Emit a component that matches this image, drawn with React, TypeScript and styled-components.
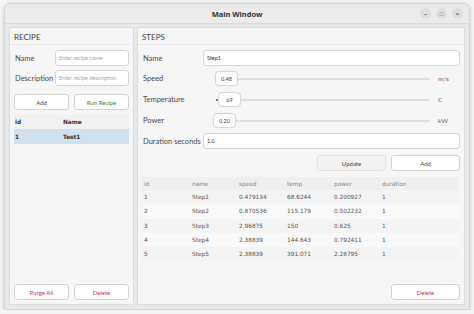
import React from "react";
import styled, { createGlobalStyle } from "styled-components";

const GlobalStyle = createGlobalStyle`
  html, body { margin: 0; padding: 0; background: #f4f4f4; }
  body { font-family: Lato, "Noto Sans", sans-serif; }
  * { box-sizing: border-box; }
`;

const Window = styled.div`
  margin: 3px 4px 0 4px;
  height: 307px;
  background: #e7e8e9;
  border: 1px solid #d2d2d2;
  border-radius: 7px 7px 2px 2px;
  box-shadow: 0 1px 4px rgba(0, 0, 0, 0.18);
  display: flex;
  flex-direction: column;
  overflow: hidden;
`;

const TitleBar = styled.div`
  height: 20px;
  background: #ebebeb;
  border-bottom: 1px solid #dadada;
  display: flex;
  align-items: center;
  justify-content: center;
  position: relative;
  font-family: "Noto Sans", sans-serif;
  font-size: 7.5px;
  font-weight: 700;
  color: #333;
`;

const Controls = styled.div`
  position: absolute;
  right: 6px;
  top: 4px;
  display: flex;
  gap: 5px;
`;

const CtlBtn = styled.div`
  width: 11px;
  height: 11px;
  border-radius: 50%;
  background: #dedede;
  display: flex;
  align-items: center;
  justify-content: center;
  color: #555;
  font-size: 6px;
  font-weight: 700;
  line-height: 1;
`;

const Body = styled.div`
  flex: 1;
  display: flex;
  gap: 3px;
  padding: 3px 4px 4px 4px;
`;

const Panel = styled.div<{ w?: number }>`
  ${(p) => (p.w ? `width: ${p.w}px;` : "flex: 1;")}
  background: #f6f6f6;
  border: 1px solid #d9dbdd;
  display: flex;
  flex-direction: column;
  padding: 0 4px 4px 4px;
`;

const PanelTitle = styled.div`
  font-size: 8px;
  color: #444;
  height: 17px;
  display: flex;
  align-items: flex-end;
  padding-bottom: 2px;
  border-bottom: 1px solid #e9e9e9;
  margin: 0 -4px 3px -4px;
  padding-left: 4px;
`;

const FormRow = styled.div<{ h?: number }>`
  display: flex;
  align-items: center;
  height: ${(p) => p.h ?? 20}px;
`;

const Label = styled.div<{ w: number }>`
  width: ${(p) => p.w}px;
  font-size: 7.5px;
  color: #4a4a4a;
  padding-left: 1px;
  flex-shrink: 0;
  white-space: nowrap;
`;

const Input = styled.div<{ placeholder?: boolean }>`
  flex: 1;
  height: 16px;
  background: #fff;
  border: 1px solid #d6d6d6;
  border-radius: 3px;
  font-size: 5.5px;
  color: ${(p) => (p.placeholder ? "#a8a8a8" : "#333")};
  display: flex;
  align-items: center;
  padding-left: 3px;
  white-space: nowrap;
  overflow: hidden;
`;

const Buttons = styled.div`
  display: flex;
  gap: 5px;
  margin-top: 6px;
`;

const Button = styled.div<{ tone?: "green" | "red"; flat?: boolean; w?: number }>`
  ${(p) => (p.w ? `width: ${p.w}px;` : "flex: 1;")}
  height: 16px;
  border: 1px solid ${(p) => (p.flat ? "#e2e2e2" : "#d3d3d3")};
  border-radius: 3px;
  background: ${(p) => (p.flat ? "#f3f3f3" : "#fff")};
  display: flex;
  align-items: center;
  justify-content: center;
  font-size: 6px;
  color: ${(p) =>
    p.tone === "green" ? "#3f8a3a" : p.tone === "red" ? "#c0394a" : "#444"};
`;

const RecipeTable = styled.div`
  margin-top: 5px;
  font-family: "DejaVu Sans", sans-serif;
`;

const RecipeHead = styled.div`
  display: grid;
  grid-template-columns: 48px 1fr;
  height: 14px;
  align-items: center;
  font-size: 5.8px;
  font-weight: 700;
  color: #333;
  padding-left: 1px;
  background: #f1f1f1;
`;

const RecipeRow = styled(RecipeHead)<{ selected?: boolean }>`
  background: ${(p) => (p.selected ? "#cfe0ee" : "transparent")};
  height: 15px;
`;

const Spacer = styled.div`
  flex: 1;
`;

const SliderArea = styled.div`
  flex: 1;
  display: flex;
  align-items: center;
  position: relative;
  height: 100%;
`;

const Track = styled.div`
  position: absolute;
  left: 20px;
  right: 30px;
  top: 50%;
  height: 2px;
  margin-top: -1px;
  background: #dedede;
  border-radius: 1px;
`;

const SpinBox = styled.div<{ offset: number }>`
  position: relative;
  margin-left: ${(p) => p.offset}px;
  width: 23px;
  height: 15px;
  background: #fff;
  border: 1px solid #d6d6d6;
  border-radius: 4px;
  font-size: 5.5px;
  color: #444;
  display: flex;
  align-items: center;
  justify-content: center;
  box-shadow: 0 0 1px rgba(0, 0, 0, 0.08);
`;

const Dot = styled.div`
  position: absolute;
  left: -3px;
  top: 6px;
  width: 2px;
  height: 2px;
  border-radius: 50%;
  background: #555;
`;

const Unit = styled.div`
  position: absolute;
  right: 6px;
  font-size: 6.5px;
  color: #666;
  width: 16px;
`;

const ActionRow = styled.div`
  display: flex;
  justify-content: flex-end;
  gap: 5px;
  margin-top: 4px;
`;

const StepsTable = styled.div`
  margin-top: 6px;
  font-family: "DejaVu Sans", sans-serif;
  font-size: 5.8px;
`;

const StepsRow = styled.div<{ head?: boolean; alt?: boolean }>`
  display: grid;
  grid-template-columns: 48px 47px 48px 47px 48px 1fr;
  align-items: center;
  height: ${(p) => (p.head ? 13 : 14.3)}px;
  padding-left: 2px;
  color: ${(p) => (p.head ? "#888" : "#555")};
  background: ${(p) => (p.head ? "#efefef" : p.alt ? "#f9f9f9" : "#f4f4f4")};
  margin-right: 1px;
`;

const steps = [
  ["1", "Step1", "0.479134", "68.6244", "0.200927", "1"],
  ["2", "Step2", "0.870536", "115.179", "0.502232", "1"],
  ["3", "Step3", "2.96875", "150", "0.625", "1"],
  ["4", "Step4", "2.38839", "144.643", "0.792411", "1"],
  ["5", "Step5", "2.38839", "391.071", "2.28795", "1"],
];

const sliders = [
  { label: "Speed", value: "0.48", unit: "m/s", offset: 12 },
  { label: "Temperature", value: "69", unit: "C", offset: 15, dot: true },
  { label: "Power", value: "0.20", unit: "kW", offset: 10 },
];

const App: React.FC = () => {
  return (
    <>
      <GlobalStyle />
      <Window>
        <TitleBar>
          Main Window
          <Controls>
            <CtlBtn>–</CtlBtn>
            <CtlBtn>□</CtlBtn>
            <CtlBtn>×</CtlBtn>
          </Controls>
        </TitleBar>
        <Body>
          <Panel w={125}>
            <PanelTitle>RECIPE</PanelTitle>
            <FormRow>
              <Label w={41}>Name</Label>
              <Input placeholder>Enter recipe name</Input>
            </FormRow>
            <FormRow>
              <Label w={41}>Description</Label>
              <Input placeholder>Enter recipe description</Input>
            </FormRow>
            <Buttons>
              <Button>Add</Button>
              <Button tone="green">Run Recipe</Button>
            </Buttons>
            <RecipeTable>
              <RecipeHead>
                <span>id</span>
                <span>Name</span>
              </RecipeHead>
              <RecipeRow selected>
                <span>1</span>
                <span>Test1</span>
              </RecipeRow>
            </RecipeTable>
            <Spacer />
            <Buttons>
              <Button tone="red">Purge All</Button>
              <Button tone="red">Delete</Button>
            </Buttons>
          </Panel>
          <Panel>
            <PanelTitle>STEPS</PanelTitle>
            <FormRow>
              <Label w={61}>Name</Label>
              <Input>Step1</Input>
            </FormRow>
            {sliders.map((s) => (
              <FormRow key={s.label} h={21}>
                <Label w={61}>{s.label}</Label>
                <SliderArea>
                  <Track />
                  <SpinBox offset={s.offset}>
                    {s.dot && <Dot />}
                    {s.value}
                  </SpinBox>
                  <Unit>{s.unit}</Unit>
                </SliderArea>
              </FormRow>
            ))}
            <FormRow>
              <Label w={61}>Duration seconds</Label>
              <Input>1.0</Input>
            </FormRow>
            <ActionRow>
              <Button flat w={69}>Update</Button>
              <Button w={69}>Add</Button>
            </ActionRow>
            <StepsTable>
              <StepsRow head>
                <span>id</span>
                <span>name</span>
                <span>speed</span>
                <span>temp</span>
                <span>power</span>
                <span>duration</span>
              </StepsRow>
              {steps.map((r, i) => (
                <StepsRow key={r[0]} alt={i % 2 === 1}>
                  {r.map((c, j) => (
                    <span key={j}>{c}</span>
                  ))}
                </StepsRow>
              ))}
            </StepsTable>
            <Spacer />
            <ActionRow>
              <Button tone="red" w={69}>Delete</Button>
            </ActionRow>
          </Panel>
        </Body>
      </Window>
    </>
  );
};

export default App;
